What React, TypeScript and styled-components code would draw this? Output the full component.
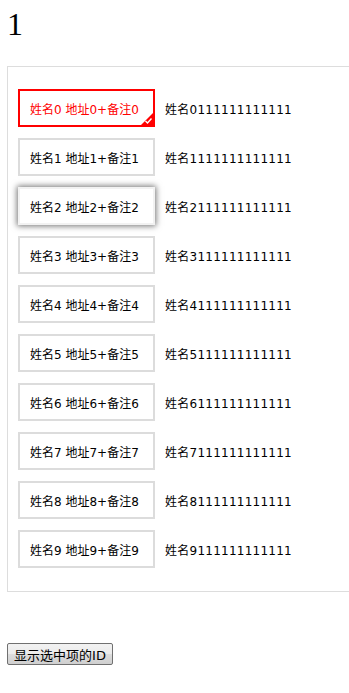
import React from "react";
import styled, { createGlobalStyle } from "styled-components";

const Global = createGlobalStyle`
  html, body { margin: 0; padding: 0; background: #fff; overflow-x: hidden; }
  body { font-family: "DejaVu Sans", "Noto Sans CJK SC", sans-serif; color: #000; }
`;

const Page = styled.div`
  padding: 6px 0 0 7px;
`;

const Heading = styled.h1`
  margin: 0;
  font-family: "Liberation Serif", serif;
  font-size: 32px;
  font-weight: normal;
  line-height: 37px;
`;

const Panel = styled.div`
  margin-top: 23px;
  border: 1px solid #dddddd;
  border-right: none;
  padding: 22px 10px 23px 10px;
  display: flex;
  flex-direction: column;
  gap: 11px;
`;

const Row = styled.div`
  display: flex;
  align-items: center;
  gap: 10px;
`;

type Variant = "normal" | "selected" | "hover";

const Card = styled.div<{ $variant: Variant }>`
  position: relative;
  box-sizing: border-box;
  width: 137px;
  height: 38px;
  padding-left: 10px;
  display: flex;
  align-items: center;
  font-size: 12px;
  white-space: nowrap;
  background: #fff;
  color: ${(p) => (p.$variant === "selected" ? "#ff0000" : "#000")};
  border: 2px solid
    ${(p) =>
      p.$variant === "selected"
        ? "#ff0000"
        : p.$variant === "hover"
        ? "#f2f2f2"
        : "#dcdcdc"};
  box-shadow: ${(p) =>
    p.$variant === "hover" ? "0 0 6px 1px rgba(0,0,0,0.55)" : "none"};
`;

const Corner = styled.svg`
  position: absolute;
  right: 0;
  bottom: 0;
  width: 12px;
  height: 12px;
  display: block;
`;

const Label = styled.span`
  font-size: 12px;
  letter-spacing: 0.25px;
  white-space: nowrap;
`;

const ShowButton = styled.button`
  margin-top: 51px;
  height: 22px;
  width: 106px;
  padding: 0 4px;
  font-family: "DejaVu Sans", "Noto Sans CJK SC", sans-serif;
  font-size: 13px;
  color: #000;
  border: 1px solid #707070;
  border-radius: 2px;
  background: linear-gradient(#f2f2f2 0%, #ebebeb 50%, #dddddd 51%, #cfcfcf 100%);
  display: block;
`;

const items = Array.from({ length: 10 }, (_, i) => i);

export default function App() {
  return (
    <>
      <Global />
      <Page>
        <Heading>1</Heading>
        <Panel>
          {items.map((i) => {
            const variant: Variant = i === 0 ? "selected" : i === 2 ? "hover" : "normal";
            return (
              <Row key={i}>
                <Card $variant={variant}>
                  {`姓名${i} 地址${i}+备注${i}`}
                  {variant === "selected" && (
                    <Corner viewBox="0 0 12 12">
                      <polygon points="12,0 12,12 0,12" fill="#ff0000" />
                      <polyline
                        points="4.5,8 6.5,10 10.5,5.5"
                        fill="none"
                        stroke="#fff"
                        strokeWidth="1.4"
                      />
                    </Corner>
                  )}
                </Card>
                <Label>{`姓名${i}111111111111`}</Label>
              </Row>
            );
          })}
        </Panel>
        <ShowButton>显示选中项的ID</ShowButton>
      </Page>
    </>
  );
}
